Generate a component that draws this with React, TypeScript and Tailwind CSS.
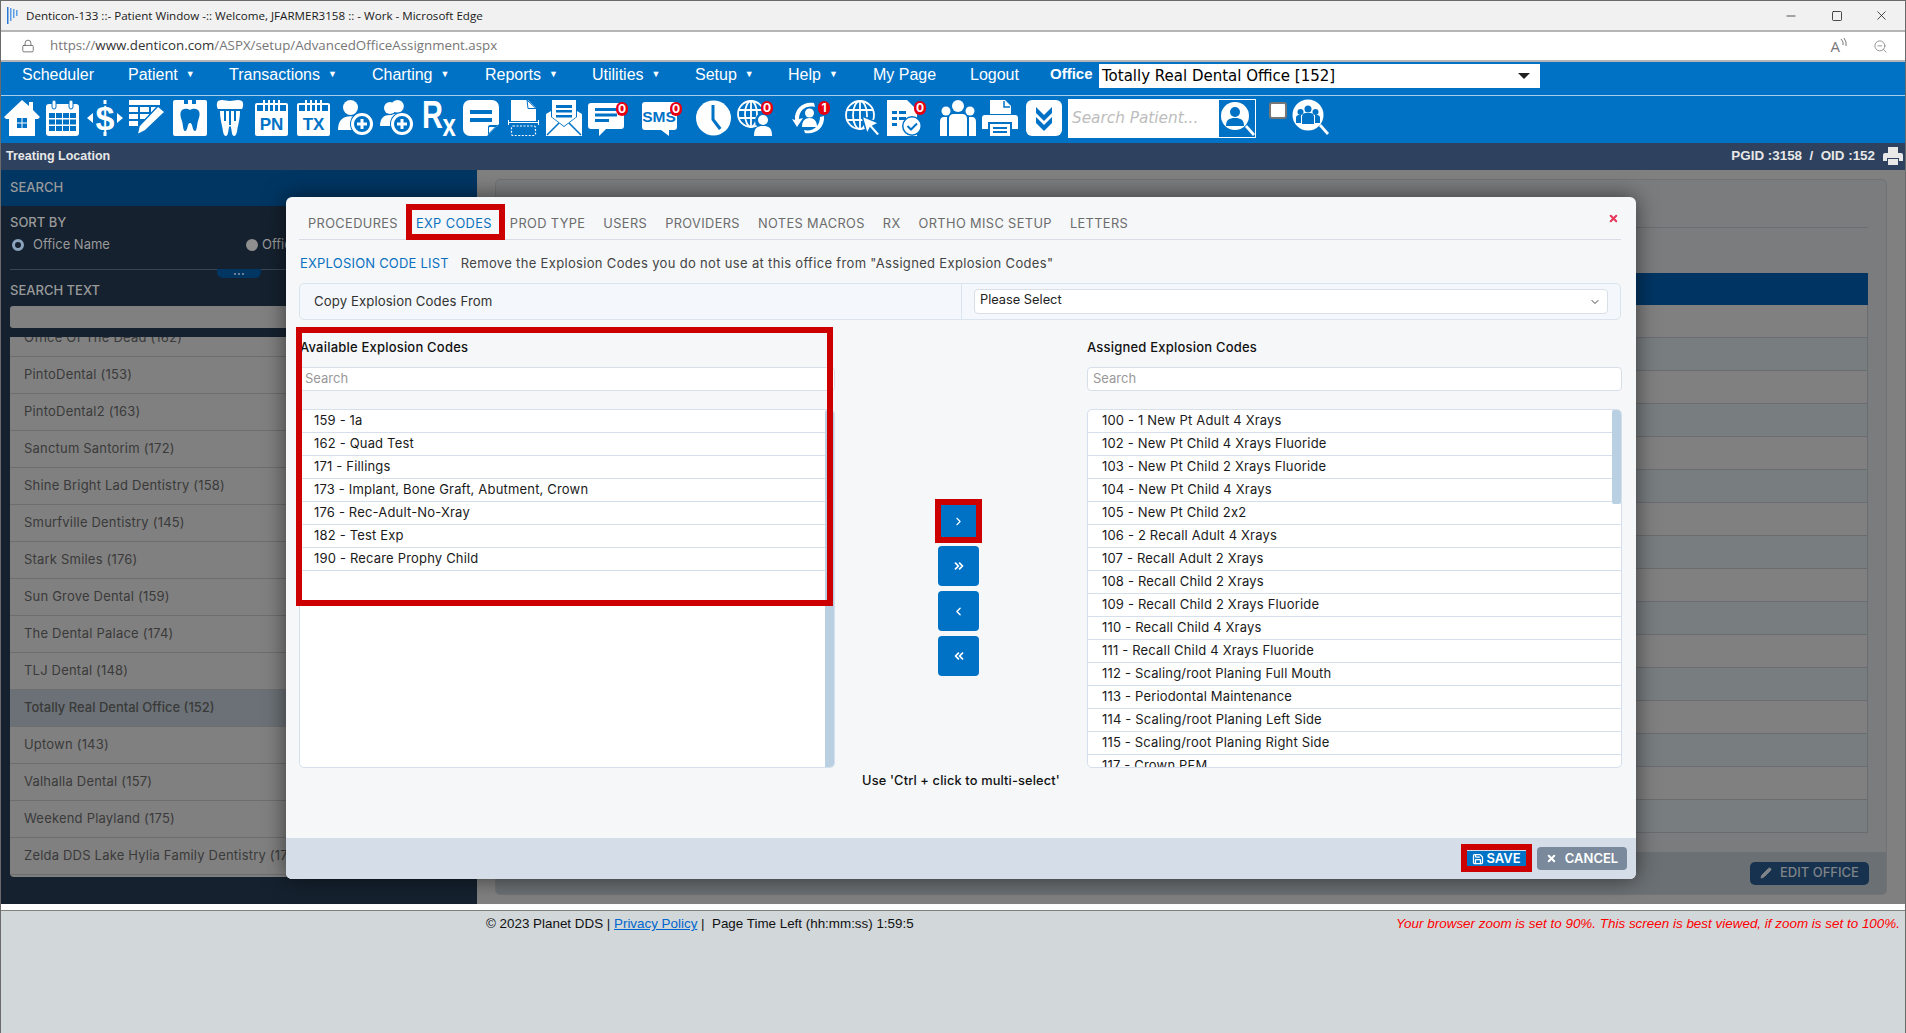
import { ChevronDown, ChevronLeft, ChevronRight, ChevronsLeft, ChevronsRight, Lock, Minus, Square, X, ZoomOut, Save, Pencil } from 'lucide-react';
import type { ReactNode } from 'react';

const BLUE = '#0072c6';

const navItems = [
  { label: 'Scheduler', w: 'w-[106px]', caret: false },
  { label: 'Patient', w: 'w-[101px]', caret: true },
  { label: 'Transactions', w: 'w-[143px]', caret: true },
  { label: 'Charting', w: 'w-[113px]', caret: true },
  { label: 'Reports', w: 'w-[107px]', caret: true },
  { label: 'Utilities', w: 'w-[103px]', caret: true },
  { label: 'Setup', w: 'w-[93px]', caret: true },
  { label: 'Help', w: 'w-[85px]', caret: true },
  { label: 'My Page', w: 'w-[97px]', caret: false },
  { label: 'Logout', w: 'w-[80px]', caret: false },
];

const tabs = ['PROCEDURES', 'EXP CODES', 'PROD TYPE', 'USERS', 'PROVIDERS', 'NOTES MACROS', 'RX', 'ORTHO MISC SETUP', 'LETTERS'];

const offices = [
  'Office Of The Dead (162)',
  'PintoDental (153)',
  'PintoDental2 (163)',
  'Sanctum Santorim (172)',
  'Shine Bright Lad Dentistry (158)',
  'Smurfville Dentistry (145)',
  'Stark Smiles (176)',
  'Sun Grove Dental (159)',
  'The Dental Palace (174)',
  'TLJ Dental (148)',
  'Totally Real Dental Office (152)',
  'Uptown (143)',
  'Valhalla Dental (157)',
  'Weekend Playland (175)',
  'Zelda DDS Lake Hylia Family Dentistry (176)',
];

const available = ['159 - 1a', '162 - Quad Test', '171 - Fillings', '173 - Implant, Bone Graft, Abutment, Crown', '176 - Rec-Adult-No-Xray', '182 - Test Exp', '190 - Recare Prophy Child'];

const assigned = [
  '100 - 1 New Pt Adult 4 Xrays',
  '102 - New Pt Child 4 Xrays Fluoride',
  '103 - New Pt Child 2 Xrays Fluoride',
  '104 - New Pt Child 4 Xrays',
  '105 - New Pt Child 2x2',
  '106 - 2 Recall Adult 4 Xrays',
  '107 - Recall Adult 2 Xrays',
  '108 - Recall Child 2 Xrays',
  '109 - Recall Child 2 Xrays Fluoride',
  '110 - Recall Child 4 Xrays',
  '111 - Recall Child 4 Xrays Fluoride',
  '112 - Scaling/root Planing Full Mouth',
  '113 - Periodontal Maintenance',
  '114 - Scaling/root Planing Left Side',
  '115 - Scaling/root Planing Right Side',
  '117 - Crown PFM',
];

function Ico({ w = 36, className = '', children }: { w?: number; className?: string; children: ReactNode }) {
  return (
    <svg width={w} height={36} viewBox={`0 0 ${w} 36`} fill="white" className={`shrink-0 overflow-visible ${className}`}>
      {children}
    </svg>
  );
}

function Badge({ n, className }: { n: number; className: string }) {
  return (
    <span className={`absolute flex h-[14px] w-[12px] items-center justify-center rounded-full bg-[#e60012] text-[12px] font-bold text-white ${className}`}>
      {n}
    </span>
  );
}

function Person({ x, y, s = 1, fill = 'white' }: { x: number; y: number; s?: number; fill?: string }) {
  return (
    <g transform={`translate(${x} ${y}) scale(${s})`} fill={fill}>
      <circle cx="10" cy="6" r="6" />
      <path d="M0 24c0-8 4-11 10-11s10 3 10 11z" />
    </g>
  );
}

function PlusBadge({ x, y }: { x: number; y: number }) {
  return (
    <g transform={`translate(${x} ${y})`}>
      <circle cx="0" cy="0" r="12" fill={BLUE} />
      <circle cx="0" cy="0" r="9.5" fill="none" stroke="white" strokeWidth="3" />
      <path d="M-1.5-5h3v3.5H5v3H1.5V5h-3V1.500H-5v-3h3.500z" />
    </g>
  );
}

function CalendarPad({ label }: { label: string }) {
  return (
    <Ico w={33}>
      <rect y="3" width="33" height="33" rx="2" />
      <path d="M2 5h29v6H2z" fill={BLUE} />
      <path d="M8 0h2v11H8zM13 0h2v11h-2zM18 0h2v11h-2zM23 0h2v11h-2z" />
      <text x="16.500" y="30" textAnchor="middle" fill={BLUE} fontFamily="Liberation Sans" fontWeight="700" fontSize="17">{label}</text>
    </Ico>
  );
}

function IconBar() {
  return (
    <div className="flex h-[47px] items-start bg-[#0072c6] pl-[3px] pt-[4px]">
      {/* home */}
      <Ico>
        <path d="M18 0l7 6V2h4v8l7 7-2 2h-3v17H5V19H2l-2-2z" />
        <path d="M13 18h4.500v4.500H13zM18.500 18H23v4.500h-4.500zM13 23.500h4.500V28H13zM18.500 23.500H23V28h-4.500z" fill={BLUE} />
      </Ico>
      {/* calendar */}
      <Ico w={33} className="ml-[6px]">
        <rect y="4" width="33" height="32" rx="3" />
        <path d="M3 13h6v5H3zM10 13h6v5h-6zM17 13h6v5h-6zM24 13h6v5h-6zM3 19.500h6v5H3zM10 19.500h6v5h-6zM17 19.500h6v5h-6zM24 19.500h6v5h-6zM3 26h6v5H3zM10 26h6v5h-6zM17 26h6v5h-6zM24 26h6v5h-6z" fill={BLUE} />
        <rect x="6" y="0" width="4" height="9" rx="2" stroke={BLUE} />
        <rect x="23" y="0" width="4" height="9" rx="2" stroke={BLUE} />
      </Ico>
      {/* dollar */}
      <Ico className="ml-[8px]">
        <path d="M0 18l6-5v10zM36 18l-6-5v10zM16.500 0h3v4h-3zM16.500 32h3v4h-3z" />
        <text x="18" y="30" textAnchor="middle" fontFamily="Liberation Sans" fontWeight="700" fontSize="34">$</text>
      </Ico>
      {/* table and pencil */}
      <Ico className="ml-[6px]">
        <path d="M0 0h31v5H0zM0 7h9v5H0zM11 7h9v5h-9zM22 7h9v5h-9zM0 14h9v5H0zM11 14h9v5h-9zM0 21h9v5H0z" />
        <path d="M29 6l7 6-20 19-8 4 2-9z" stroke={BLUE} strokeWidth="1.500" />
      </Ico>
      {/* tooth card */}
      <Ico w={34} className="ml-[8px]">
        <rect width="34" height="36" rx="2" />
        <path d="M11 0h4v4h-4zM19 0h4v4h-4z" fill={BLUE} />
        <path d="M9 10c3-2 6-1 8 0 2-1 5-2 8 0 3 3 1 8 0 11-1 3-1 10-3 10-3 0-2-8-5-8s-2 8-5 8c-2 0-2-7-3-10-1-3-3-8 0-11z" fill={BLUE} />
      </Ico>
      {/* crown */}
      <Ico w={26} className="ml-[10px]">
        <path d="M1 1c4-2 8 0 12 0s8-2 12 0c2 2 1 7 0 8H1C0 8-1 3 1 1z" />
        <path d="M3 11h20c0 6-1 10-2 15-1 4-1 10-4 10-3 0-2-10-4-10s-1 10-4 10c-3 0-3-6-4-10-1-5-2-9-2-15z" />
        <path d="M7 11h2v10H7zM12 11h2v14h-2zM17 11h2v10h-2z" fill={BLUE} />
      </Ico>
      <div className="ml-[12px]">
        <CalendarPad label="PN" />
      </div>
      <div className="ml-[9px]">
        <CalendarPad label="TX" />
      </div>
      {/* user plus */}
      <Ico className="ml-[8px]">
        <Person x={0} y={0} s={1.25} />
        <PlusBadge x={24} y={24} />
      </Ico>
      {/* users plus */}
      <Ico w={34} className="ml-[6px]">
        <Person x={0} y={2} s={1} />
        <Person x={7} y={0} s={1.05} />
        <PlusBadge x={22} y={24} />
      </Ico>
      {/* rx */}
      <Ico w={33} className="ml-[8px]">
        <text transform="translate(0 28) scale(1 1.32)" fontFamily="Liberation Sans" fontWeight="700" fontSize="29">R</text>
        <text transform="translate(20.500 36) scale(1 1.3)" fontFamily="Liberation Sans" fontWeight="700" fontSize="24">x</text>
      </Ico>
      {/* note */}
      <Ico className="ml-[8px]">
        <path d="M7 0h22a7 7 0 0 1 7 7v17L24 36H7a7 7 0 0 1-7-7V7a7 7 0 0 1 7-7z" />
        <path d="M7 10h22v4H7zM7 18h22v4H7zM25 35V27q0-2 2-2h8z" fill={BLUE} />
        <path d="M26 33v-5q0-1 1-1h5z" />
      </Ico>
      {/* scan page */}
      <Ico w={31} className="ml-[9px]">
        <path d="M3 0h16l9 9v12H3z" />
        <path d="M20 0v8h8z" fill={BLUE} />
        <path d="M20 0l8 8h-8z" />
        <path d="M20 8.500h8L19 0z" fill="none" stroke={BLUE} />
        <path d="M0 20h1v2h29v-2h1v5h-1v-2H1v2H0z" />
        <rect x="3.500" y="26" width="24" height="9.500" rx="1.500" fill="none" stroke="white" strokeWidth="1.200" strokeDasharray="2 1.500" />
      </Ico>
      {/* mail */}
      <Ico className="ml-[7px]">
        <path d="M6 0h24v17L18 26 6 17z" />
        <path d="M10 5h16v3H10zM10 10h16v2.500H10zM10 15h16v2.500H10z" fill={BLUE} />
        <path d="M0 14l5-3v6l13 10 13-10v-6l5 3v22H0z" />
        <path d="M1 35l12-12M35 35L23 23" stroke={BLUE} strokeWidth="1.500" />
      </Ico>
      {/* chat */}
      <div className="relative ml-[6px]">
        <Ico>
          <path d="M3 3h30a3 3 0 0 1 3 3v20a3 3 0 0 1-3 3H18l-7 7v-7H3a3 3 0 0 1-3-3V6a3 3 0 0 1 3-3z" />
          <path d="M7 8h22v3H7zM7 13.500h22v3H7zM7 19h14v3H7z" fill={BLUE} />
        </Ico>
        <Badge n={0} className="left-[28px] top-[2px]" />
      </div>
      {/* sms */}
      <div className="relative ml-[18px]">
        <Ico w={35}>
          <path d="M3 2h29a3 3 0 0 1 3 3v22a3 3 0 0 1-3 3h-5v6l-8-6H3a3 3 0 0 1-3-3V5a3 3 0 0 1 3-3z" />
          <text x="17" y="22" textAnchor="middle" fill={BLUE} fontFamily="Liberation Sans" fontWeight="700" fontSize="15.500">SMS</text>
        </Ico>
        <Badge n={0} className="left-[28px] top-[2px]" />
      </div>
      {/* clock */}
      <Ico w={35} className="ml-[19px]">
        <circle cx="17.500" cy="18" r="17.500" />
        <path d="M15.500 5h3v14l7 9-2.500 2-7.500-10z" fill={BLUE} />
      </Ico>
      {/* globe user */}
      <div className="relative ml-[6px]">
        <Ico>
          <g fill="none" stroke="white" strokeWidth="1.800">
            <circle cx="14" cy="14" r="13" />
            <ellipse cx="14" cy="14" rx="6" ry="13" />
            <path d="M14 1v26M1.500 10h25M1.500 18h25" />
          </g>
          <circle cx="26" cy="21" r="8" fill={BLUE} />
          <circle cx="26" cy="20" r="5" />
          <path d="M17 36c0-8 3-10 9-10s9 2 9 10z" />
        </Ico>
        <Badge n={0} className="left-[24px] top-[1px]" />
      </div>
      {/* refresh user */}
      <div className="relative ml-[19px]">
        <Ico w={35}>
          <path d="M3 20C2 8 12 1 22 3l1 4C14 5 7 10 7 19l4-1-6 9-5-8zM32 16c1 12-9 19-19 17l-1-3c9 2 16-4 16-13z" />
          <circle cx="17.500" cy="13" r="4.500" />
          <path d="M10 27c0-6 3-9 7.500-9s7.500 3 7.500 9z" />
        </Ico>
        <Badge n={1} className="left-[26px] top-[1px]" />
      </div>
      {/* globe cursor */}
      <Ico className="ml-[18px]">
        <g fill="none" stroke="white" strokeWidth="1.800">
          <circle cx="15" cy="15" r="14" />
          <ellipse cx="15" cy="15" rx="7" ry="14" />
          <path d="M15 1v28M2 10h26M2 20h26" />
        </g>
        <path d="M17 16l17 7-6 3 7 8-3 2-7-8-3 6z" stroke={BLUE} strokeWidth="1.500" />
      </Ico>
      {/* document check */}
      <div className="relative ml-[6px]">
        <Ico>
          <path d="M0 0h20l10 10v26H0z" />
          <path d="M5 11h5v3H5zM12 11h7v3h-7zM5 17h5v3H5zM12 17h7v3h-7zM5 23h5v3H5z" fill={BLUE} />
          <circle cx="25" cy="26" r="10" fill={BLUE} />
          <circle cx="25" cy="26" r="8.500" />
          <path d="M20.500 26l3.500 3.500 6-6" fill="none" stroke={BLUE} strokeWidth="2" />
        </Ico>
        <Badge n={0} className="left-[27px] top-[1px]" />
      </div>
      {/* people */}
      <Ico className="ml-[17px]">
        <circle cx="18" cy="6" r="6" />
        <circle cx="6" cy="11" r="4.500" />
        <circle cx="30" cy="11" r="4.500" />
        <path d="M0 36V22q0-5 4-5h3v19zM36 36V22q0-5-4-5h-3v19zM9 36V19q0-5 5-5h8q5 0 5 5v17z" />
      </Ico>
      {/* printer */}
      <Ico className="ml-[6px]">
        <path d="M8 0h15l6 6v8H8z" />
        <path d="M22 1v6h6" fill="none" stroke={BLUE} strokeWidth="1.500" />
        <path d="M3 15h30a3 3 0 0 1 3 3v11h-6v-7H6v7H0V18a3 3 0 0 1 3-3z" />
        <path d="M8 24h20v12H8z" />
        <path d="M11 27h14v2H11zM11 31h14v2H11z" fill={BLUE} />
      </Ico>
      {/* collapse */}
      <Ico className="ml-[8px]">
        <rect width="36" height="36" rx="6" />
        <path d="M10 7l8 8 8-8v6l-8 8-8-8zM10 17l8 8 8-8v6l-8 8-8-8z" fill={BLUE} />
      </Ico>
      {/* patient search */}
      <div className="ml-[6px] -mt-[1px] flex h-[39px] w-[188px] items-center justify-between bg-white pr-[1px]">
        <span className="pl-[4px] [font-family:'DejaVu_Sans',sans-serif] text-[15.300px] italic text-[#bdbdbd]">Search Patient...</span>
        <div className="flex h-[37px] w-[36px] items-center justify-center bg-[#0072c6]">
          <Ico>
            <circle cx="16" cy="15" r="14" />
            <circle cx="16" cy="11" r="5" fill={BLUE} />
            <path d="M7 25c0-6 3-8 9-8s9 2 9 8z" fill={BLUE} />
            <path d="M26 26l2-2 8 9-2 2z" />
          </Ico>
        </div>
      </div>
      <div className="ml-[13px] mt-[2px] h-[17px] w-[18px] rounded-[3px] border-2 border-[#767676] bg-white" />
      <Ico w={37} className="ml-[5px]">
        <circle cx="16" cy="15" r="15.500" />
        <circle cx="16" cy="9" r="3.500" fill={BLUE} />
        <circle cx="8.500" cy="12" r="3" fill={BLUE} />
        <circle cx="23.500" cy="12" r="3" fill={BLUE} />
        <path d="M10 24v-7q0-4 4-4h4q4 0 4 4v7zM4 23v-5q0-3 3-3h2v8zM28 23v-5q0-3-3-3h-2v8z" fill={BLUE} />
        <path d="M27 26l2-2 8 9-2 2z" />
      </Ico>
    </div>
  );
}

function CodeList({ items, thumb }: { items: string[]; thumb: string }) {
  return (
    <div className="relative h-[359px] overflow-hidden rounded-[5px] border border-[#d6e0ec] bg-white">
      {items.map((code) => (
        <div key={code} className="flex h-[23px] shrink-0 items-center border-b border-[#d6e0ec] pb-[2px] pl-[14px] text-[13px] leading-none tracking-[0.18px] text-[#1a1a1a]">
          {code}
        </div>
      ))}
      <div className={`absolute right-0 top-0 w-[9px] rounded-[2px] bg-[#b9d0e3] ${thumb}`} />
    </div>
  );
}

function ArrowBtn({ children }: { children: ReactNode }) {
  return <div className="flex h-[40px] w-[41px] items-center justify-center rounded-[4px] bg-[#0072c6] text-white">{children}</div>;
}

function Modal() {
  return (
    <div className="absolute left-[285px] top-[27px] flex h-[682px] w-[1350px] flex-col rounded-[6px] bg-[#f5f7f9] shadow-[0_0_22px_rgba(0,0,0,0.55)]">
      <div className="ml-[13px] mr-[15px] flex h-[43px] items-center border-b border-[#d8dde6] pt-[11px]">
        {tabs.map((t) => (
          <span key={t} className={`whitespace-nowrap px-[9px] text-[12.800px] tracking-[0.38px] ${t === 'EXP CODES' ? 'text-[#0a70c0]' : 'text-[#6c6c6c]'}`}>
            {t}
          </span>
        ))}
      </div>
      <X className="absolute left-[1322px] top-[16px] h-[11px] w-[11px] text-[#e8385a]" strokeWidth={4.500} />

      <div className="mx-[14px] flex h-[43px] items-center gap-[12px] pt-[4px] text-[13px]">
        <span className="tracking-[0.2px] text-[#0a70c0]">EXPLOSION CODE LIST</span>
        <span className="tracking-[0.33px] text-[#444]">Remove the Explosion Codes you do not use at this office from "Assigned Explosion Codes"</span>
      </div>

      <div className="ml-[13px] mr-[15px] flex h-[37px] rounded-[5px] border border-[#dbe3ec] bg-[#f4f8fc]">
        <div className="flex w-[662px] items-center border-r border-[#dbe3ec] pl-[14px] text-[13.200px] tracking-[0.1px] text-[#333]">Copy Explosion Codes From</div>
        <div className="flex flex-1 items-center pl-[12px] pr-[12px]">
          <div className="flex h-[25px] flex-1 items-center justify-between rounded-[4px] border border-[#d8dfe9] bg-white pb-[3px] pl-[5px] pr-[6px] text-[12.800px] text-[#222]">
            Please Select
            <ChevronDown className="mt-[3px] h-[12px] w-[12px] text-[#444]" strokeWidth={2} />
          </div>
        </div>
      </div>

      <div className="ml-[13px] mr-[14px] mt-[8px] flex">
        <div className="w-[536px]">
          <div className="flex h-[39px] items-center pl-[1px] text-[13px] font-medium tracking-[0.2px] text-[#111]">Available Explosion Codes</div>
          <div className="flex h-[24px] items-center rounded-[4px] border border-[#d8dfe9] bg-white pl-[5px] text-[13px] text-[#999]">Search</div>
          <div className="mt-[18px]">
            <CodeList items={available} thumb="h-[359px]" />
          </div>
        </div>
        <div className="flex flex-1 flex-col items-center pt-[173px]">
          <div className="mr-[5px] flex flex-col gap-[5px]">
            <ArrowBtn><ChevronRight className="h-[13px] w-[13px]" strokeWidth={2} /></ArrowBtn>
            <ArrowBtn><ChevronsRight className="h-[14px] w-[14px]" strokeWidth={3} /></ArrowBtn>
            <ArrowBtn><ChevronLeft className="h-[13px] w-[13px]" strokeWidth={2.500} /></ArrowBtn>
            <ArrowBtn><ChevronsLeft className="h-[14px] w-[14px]" strokeWidth={3} /></ArrowBtn>
          </div>
          <div className="mt-[99px] whitespace-nowrap text-[12.800px] font-medium leading-none tracking-[0.15px] text-[#111]">Use 'Ctrl + click to multi-select'</div>
        </div>
        <div className="w-[535px]">
          <div className="flex h-[39px] items-center text-[13px] font-medium tracking-[0.2px] text-[#111]">Assigned Explosion Codes</div>
          <div className="flex h-[24px] items-center rounded-[4px] border border-[#d8dfe9] bg-white pl-[5px] text-[13px] text-[#999]">Search</div>
          <div className="mt-[18px]">
            <CodeList items={assigned} thumb="h-[94px]" />
          </div>
        </div>
      </div>

      <div className="mt-auto flex h-[41px] items-center justify-end gap-[11px] rounded-b-[6px] bg-[#d5dee8] pr-[9px]">
        <div className="flex h-[16px] w-[59px] items-center justify-center gap-[2px] bg-[#0072c6] text-[13px] font-semibold text-white">
          <Save className="h-[12px] w-[12px]" strokeWidth={2.500} />
          SAVE
        </div>
        <div className="flex h-[23px] w-[90px] items-center justify-center gap-[8px] rounded-[4px] bg-[#7a8a9c] text-[13px] font-semibold text-white">
          <X className="h-[11px] w-[11px]" strokeWidth={4.500} />
          CANCEL
        </div>
      </div>

      {/* red tutorial highlights */}
      <div className="absolute left-[120px] top-[7px] h-[36px] w-[99px] border-[6px] border-[#cc0000]" />
      <div className="absolute left-[10px] top-[130px] h-[279px] w-[537px] border-[6px] border-[#cc0000]" />
      <div className="absolute left-[649px] top-[302px] h-[44px] w-[47px] border-[6px] border-[#cc0000]" />
      <div className="absolute left-[1175px] top-[647px] h-[28px] w-[71px] border-[6px] border-[#cc0000]" />
    </div>
  );
}

function Sidebar() {
  return (
    <aside className="flex w-[476px] shrink-0 flex-col bg-[#15212f] text-[#9a9a9a]">
      <div className="flex h-[36px] items-center bg-[#013663] pl-[9px] text-[13px] font-medium">SEARCH</div>
      <div className="px-[9px]">
        <div className="mt-[8px] h-[16px] text-[13px] font-medium leading-[16px]">SORT BY</div>
        <div className="mt-[7px] flex h-[16px] items-center text-[13px]">
          <span className="ml-[2px] h-[12px] w-[12px] rounded-full border-[3px] border-[#8ba4bc] bg-[#15212f]" />
          <span className="ml-[9px] w-[213px]">Office Name</span>
          <span className="h-[12px] w-[12px] rounded-full bg-[#8f8f8f]" />
          <span className="ml-[4px]">Office Number</span>
        </div>
        <div className="relative mt-[16px] h-[1px] bg-[#3a4654]">
          <div className="absolute left-[207px] top-0 flex h-[9px] w-[44px] items-center justify-center gap-[2px] rounded-b-[6px] bg-[#013663]">
            <span className="h-[2px] w-[2px] rounded-full bg-[#8f9aa5]" />
            <span className="h-[2px] w-[2px] rounded-full bg-[#8f9aa5]" />
            <span className="h-[2px] w-[2px] rounded-full bg-[#8f9aa5]" />
          </div>
        </div>
        <div className="mt-[12px] h-[16px] text-[13px] font-medium leading-[16px]">SEARCH TEXT</div>
        <div className="mt-[8px] h-[22px] rounded-[3px] bg-[#808080]" />
        <div className="mt-[9px] h-[540px] overflow-hidden rounded-b-[4px] bg-[#808080] text-[13px] tracking-[0.2px] text-[#3a3a3a]">
          <div className="-mt-[17px]">
            {offices.map((o) => (
              <div key={o} className={`flex h-[37px] items-center whitespace-nowrap border-b border-[#6e6e6e] pl-[14px] ${o.startsWith('Totally') ? 'bg-[#6b7176] font-medium tracking-[0px]' : ''}`}>
                {o}
              </div>
            ))}
          </div>
        </div>
      </div>
    </aside>
  );
}

function OfficeCard() {
  const rows = Array.from({ length: 16 }, (_, i) => i);
  return (
    <div className="flex-1 pl-[18px] pr-[18px] pt-[9px]">
      <div className="flex h-[716px] flex-col overflow-hidden rounded-[5px] border border-[#707276] bg-[#7b7c7e]">
        <div className="pr-[18px]">
          <div className="mt-[47px] h-[1px] bg-[#6b6d70]" />
          <div className="mt-[45px] h-[32px] bg-[#003563]" />
          {rows.map((i) => (
            <div key={i} className={`h-[33px] border-b border-r border-[#6a6d70] ${i % 2 === 0 ? 'bg-[#808080]' : 'bg-[#787d80]'}`} />
          ))}
        </div>
        <div className="mt-auto flex h-[42px] items-center justify-end bg-[#6b7074] pr-[17px]">
          <div className="flex h-[23px] w-[119px] items-center justify-center gap-[8px] rounded-[5px] bg-[#17324f] text-[13px] font-medium text-[#7f8488]">
            <Pencil className="h-[12px] w-[12px] fill-[#7f8488]" />
            EDIT OFFICE
          </div>
        </div>
      </div>
    </div>
  );
}

export default function App() {
  return (
    <div className="flex h-[1033px] w-[1906px] flex-col overflow-hidden border-x border-t border-[#6a6a6a] bg-white [font-family:Inter,sans-serif]">
      <div className="flex h-[29px] items-center justify-between bg-[#f1f1f1]">
        <div className="flex items-center">
          <svg width="12" height="17" viewBox="0 0 12 17" className="ml-[6px]">
            <path d="M0 0h1.500v17H0z" fill="#2a78d6" />
            <path d="M3 1h1.500v13H3zM6 2h1.500v9H6zM9 3h1.500v6H9z" fill="#5b9ee6" />
          </svg>
          <span className="ml-[7px] [font-family:'Open_Sans',sans-serif] text-[11.600px] text-[#1a1a1a]">Denticon-133 ::- Patient Window -:: Welcome, JFARMER3158 :: - Work - Microsoft Edge</span>
        </div>
        <div className="flex items-center text-[#111]">
          <Minus className="h-[14px] w-[14px]" strokeWidth={1.200} />
          <Square className="ml-[33px] h-[12px] w-[12px]" strokeWidth={1.500} />
          <X className="ml-[31px] mr-[16px] h-[15px] w-[15px]" strokeWidth={1.200} />
        </div>
      </div>
      <div className="flex h-[32px] items-center justify-between border-y-2 border-[#b5b5b5] bg-white">
        <div className="flex items-center">
          <Lock className="ml-[20px] h-[14px] w-[14px] text-[#555]" strokeWidth={1.300} />
          <span className="ml-[15px] [font-family:'Open_Sans',sans-serif] text-[13.300px] text-[#777]">
            https://<span className="text-[#333]">www.denticon.com</span>/ASPX/setup/AdvancedOfficeAssignment.aspx
          </span>
        </div>
        <div className="flex items-center text-[#777]">
          <span className="[font-family:'Open_Sans',sans-serif] text-[15px] leading-none">A</span>
          <svg width="7" height="12" viewBox="0 0 7 12" fill="none" stroke="#777" strokeWidth="1" className="-mt-[4px]">
            <path d="M1 1q3 3 2 6M4 0q3 4 2 8" />
          </svg>
          <ZoomOut className="ml-[26px] mr-[17px] h-[15px] w-[15px]" strokeWidth={1.200} />
        </div>
      </div>

      <div className="flex h-[34px] items-center border-b border-[#a9cdea] bg-[#0072c6] pb-[5px] pl-[21px] [font-family:'Liberation_Sans',Arial,sans-serif] text-[16px] text-white">
        {navItems.map((n) => (
          <div key={n.label} className={`flex items-center pb-[3px] ${n.w}`}>
            {n.label}
            {n.caret && <span className="ml-[8px] text-[9px]">▼</span>}
          </div>
        ))}
        <span className="w-[49px] pb-[3px] text-[15px] font-bold">Office</span>
        <div className="flex h-[24px] w-[441px] items-center justify-between bg-white pl-[3px] pr-[10px] [font-family:'DejaVu_Sans',sans-serif] text-[15px] text-black">
          Totally Real Dental Office [152]
          <span className="h-0 w-0 border-x-[6px] border-t-[6px] border-x-transparent border-t-[#222]" />
        </div>
      </div>
      <IconBar />
      <div className="flex h-[27px] items-center justify-between bg-[#2e415e] pl-[5px] pr-[2px] [font-family:'Liberation_Sans',Arial,sans-serif] font-bold text-[#e8e8e8]">
        <span className="text-[12.500px]">Treating Location</span>
        <div className="flex items-center gap-[8px]">
          <span className="text-[13.400px]">PGID :3158&nbsp; /&nbsp; OID :152</span>
          <svg width="20" height="18" viewBox="0 0 20 18" fill="#e8e8e8">
            <path d="M5 0h10v6H5zM2 6h16a2 2 0 0 1 2 2v6h-4v-3H4v3H0V8a2 2 0 0 1 2-2zM5 12h10v6H5z" />
          </svg>
        </div>
      </div>

      <main className="relative flex h-[734px] bg-[#808080]">
        <Sidebar />
        <OfficeCard />
        <Modal />
      </main>

      <div className="h-[7px] border-b border-[#808080] bg-white" />
      <footer className="flex flex-1 items-start justify-between bg-[#d2d7da] pl-[485px] pr-[5px] pt-[3px] [font-family:'Liberation_Sans',Arial,sans-serif] text-[13.400px] text-[#111]">
        <div>
          © 2023 Planet DDS | <span className="text-[#0066cc] underline">Privacy Policy</span> |&nbsp; Page Time Left (hh:mm:ss) 1:59:5
        </div>
        <div className="text-[13.450px] italic text-[#f00]">Your browser zoom is set to 90%. This screen is best viewed, if zoom is set to 100%.</div>
      </footer>
    </div>
  );
}
